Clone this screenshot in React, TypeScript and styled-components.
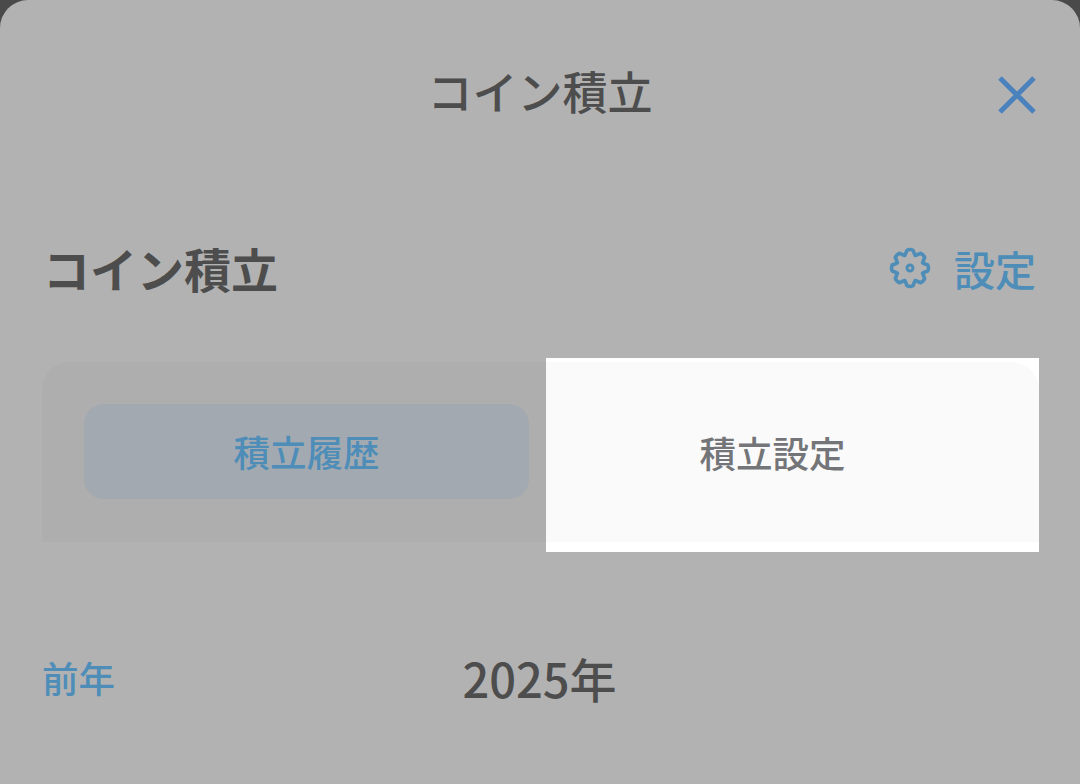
import styled, { createGlobalStyle } from "styled-components";

const GlobalStyle = createGlobalStyle`
  html, body {
    margin: 0;
    padding: 0;
    background: #4a4a4a;
  }
  body {
    font-family: "Noto Sans CJK JP", "Noto Sans", sans-serif;
  }
`;

const Sheet = styled.div`
  width: 1080px;
  height: 784px;
  overflow: hidden;
  box-sizing: border-box;
  background: #b2b2b2;
  border-radius: 28px 28px 0 0;
`;

const Header = styled.header`
  height: 190px;
  box-sizing: border-box;
  padding: 62px 44px 0 44px;
  display: grid;
  grid-template-columns: 1fr auto 1fr;
  align-items: start;
`;

const HeaderTitle = styled.h1`
  grid-column: 2;
  margin: 0;
  font-size: 45px;
  line-height: 58px;
  font-weight: 500;
  color: #4d4d4d;
`;

const CloseButton = styled.button`
  grid-column: 3;
  justify-self: end;
  width: 38px;
  height: 38px;
  margin-top: 14px;
  padding: 0;
  border: 0;
  background: none;
  color: #4a82bd;
  display: block;
`;

const SectionHead = styled.div`
  height: 168px;
  box-sizing: border-box;
  padding: 48px 44px 0 43px;
  display: flex;
  justify-content: space-between;
  align-items: flex-start;
`;

const SectionTitle = styled.h2`
  margin: 0;
  font-size: 47px;
  line-height: 60px;
  font-weight: 700;
  color: #4d4d4d;
`;

const SettingsLink = styled.a`
  display: flex;
  align-items: center;
  gap: 23px;
  font-size: 41px;
  line-height: 60px;
  font-weight: 500;
  color: #4d8db8;
`;

const Tabs = styled.div`
  margin-left: 42px;
  display: flex;
  align-items: flex-start;
  height: 194px;
`;

const TabTrack = styled.div`
  width: 504px;
  height: 180px;
  margin-top: 4px;
  box-sizing: border-box;
  padding: 42px 17px 43px 42px;
  background: #aeaeae;
  border-radius: 28px 0 0 0;
`;

const Spotlight = styled.div`
  width: 493px;
  height: 194px;
  box-sizing: border-box;
  padding: 4px 0 10px;
  background: #ffffff;
`;

const SpotlightTab = styled.div`
  height: 100%;
  background: #fafafa;
  border-radius: 0 28px 0 0;
  display: flex;
  align-items: center;
  justify-content: center;
  padding-right: 40px;
  box-sizing: border-box;
  font-size: 36.5px;
  font-weight: 500;
  color: #747578;
`;

const ActiveTab = styled.div`
  height: 95px;
  border-radius: 20px;
  background: #a2a9b0;
  display: flex;
  align-items: center;
  justify-content: center;
  font-size: 36.5px;
  font-weight: 500;
  color: #4d8db8;
`;

const YearNav = styled.div`
  margin-top: 96px;
  padding: 0 43px 0 42px;
  display: grid;
  grid-template-columns: 1fr auto 1fr;
  align-items: center;
`;

const PrevYear = styled.a`
  font-size: 36.5px;
  line-height: 52px;
  font-weight: 500;
  color: #4d8db8;
`;

const CurrentYear = styled.div`
  font-size: 47px;
  line-height: 60px;
  font-weight: 500;
  color: #4d4d4d;
`;

// 8 rounded teeth, outline only, traced from the reference
function gearPath() {
  const points: string[] = [];
  for (let i = 0; i < 8; i++) {
    const a = (i * Math.PI) / 4 - Math.PI / 2;
    const at = (r: number, d: number) =>
      `${(21 + r * Math.cos(a + d)).toFixed(2)} ${(21 + r * Math.sin(a + d)).toFixed(2)}`;
    points.push(
      `${i === 0 ? "M" : "L"}${at(13.6, -0.39)} Q${at(15.6, -0.26)} ${at(18, -0.17)} Q${at(19.2, 0)} ${at(18, 0.17)} Q${at(15.6, 0.26)} ${at(13.6, 0.39)}`
    );
  }
  return points.join(" ") + "Z";
}

function GearIcon() {
  return (
    <svg width="42" height="42" viewBox="0 0 42 42" fill="none" stroke="currentColor" strokeWidth="3.6" strokeLinejoin="round">
      <path d={gearPath()} />
      <circle cx="21" cy="21" r="3" strokeWidth="3" />
    </svg>
  );
}

function CloseIcon() {
  return (
    <svg width="38" height="38" viewBox="0 0 38 38" stroke="currentColor" strokeWidth="5" fill="none">
      <path d="M2 2 L36 36 M36 2 L2 36" />
    </svg>
  );
}

export default function App() {
  return (
    <>
      <GlobalStyle />
      <Sheet>
        <Header>
          <HeaderTitle>コイン積立</HeaderTitle>
          <CloseButton aria-label="閉じる">
            <CloseIcon />
          </CloseButton>
        </Header>
        <SectionHead>
          <SectionTitle>コイン積立</SectionTitle>
          <SettingsLink>
            <GearIcon />
            設定
          </SettingsLink>
        </SectionHead>
        <Tabs>
          <TabTrack>
            <ActiveTab>積立履歴</ActiveTab>
          </TabTrack>
          <Spotlight>
            <SpotlightTab>積立設定</SpotlightTab>
          </Spotlight>
        </Tabs>
        <YearNav>
          <PrevYear>前年</PrevYear>
          <CurrentYear>2025年</CurrentYear>
        </YearNav>
      </Sheet>
    </>
  );
}
